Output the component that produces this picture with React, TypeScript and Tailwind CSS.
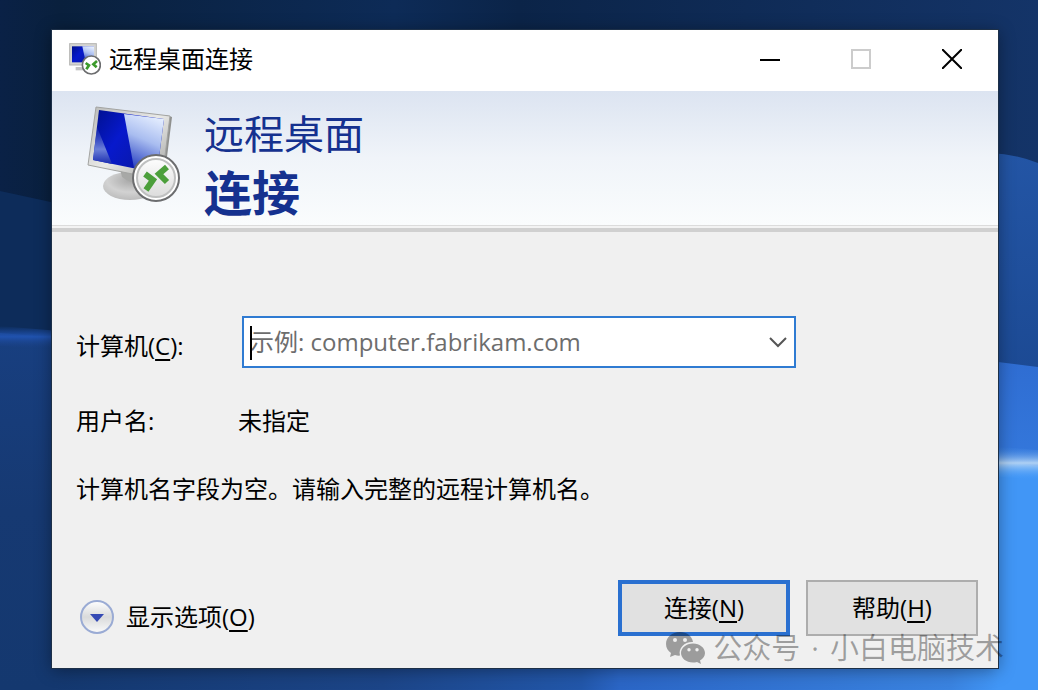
import { useState } from "react";
import type { ReactNode } from "react";

function Wallpaper() {
  return (
    <svg
      className="absolute inset-0 -z-10 h-full w-full"
      viewBox="0 0 1038 690"
      preserveAspectRatio="none"
      aria-hidden="true"
    >
      <defs>
        <linearGradient id="sky" x1="0" x2="1" y1="0" y2="0">
          <stop offset="0" stopColor="#0a2146" />
          <stop offset="0.06" stopColor="#09203d" />
          <stop offset="0.38" stopColor="#0d2b57" />
          <stop offset="0.5" stopColor="#0b2448" />
          <stop offset="1" stopColor="#143468" />
        </linearGradient>
        <linearGradient id="leftWall" x1="0" x2="0" y1="0" y2="1">
          <stop offset="0" stopColor="#183f80" />
          <stop offset="0.5" stopColor="#163972" />
          <stop offset="1" stopColor="#14386f" />
        </linearGradient>
        <linearGradient id="floor" x1="0" x2="1" y1="0" y2="0">
          <stop offset="0" stopColor="#14386f" />
          <stop offset="0.35" stopColor="#1c4588" />
          <stop offset="0.56" stopColor="#2257aa" />
          <stop offset="0.6" stopColor="#2b66c6" />
          <stop offset="0.95" stopColor="#3a83e0" />
          <stop offset="1" stopColor="#4196f6" />
        </linearGradient>
        <linearGradient id="glowLeft" x1="0" x2="0" y1="0" y2="1">
          <stop offset="0" stopColor="#1d4ea8" stopOpacity="0" />
          <stop offset="0.45" stopColor="#2052ae" />
          <stop offset="1" stopColor="#173b7a" stopOpacity="0" />
        </linearGradient>
        <linearGradient id="midRight" x1="0" x2="0" y1="0" y2="1">
          <stop offset="0" stopColor="#2355a5" />
          <stop offset="1" stopColor="#1c4a94" />
        </linearGradient>
        <linearGradient id="lowRight" x1="0" x2="0" y1="0" y2="1">
          <stop offset="0" stopColor="#2f6dd2" />
          <stop offset="1" stopColor="#3478dc" />
        </linearGradient>
        <linearGradient id="beam" x1="0" x2="0" y1="0" y2="1">
          <stop offset="0" stopColor="#3a86e6" stopOpacity="0" />
          <stop offset="0.5" stopColor="#aed0f4" />
          <stop offset="1" stopColor="#4199fa" stopOpacity="0" />
        </linearGradient>
      </defs>
      <rect width="1038" height="690" fill="url(#sky)" />
      <path d="M0 191 L60 204 V340 H0Z" fill="#0d2c5a" />
      <path d="M0 333 L60 338 V690 H0Z" fill="url(#leftWall)" />
      <path d="M0 326 L60 331 V350 L0 346Z" fill="url(#glowLeft)" />
      <path d="M990 153 Q1016 154 1038 163 V370 H990Z" fill="url(#midRight)" />
      <path d="M990 361 L1038 367 V466 H990Z" fill="url(#lowRight)" />
      <path d="M990 460 L1038 466 V690 H990Z" fill="#4196f6" />
      <path d="M990 446 L1038 450 V480 L990 476Z" fill="url(#beam)" />
      <rect x="52" y="660" width="946" height="30" fill="url(#floor)" />
    </svg>
  );
}

function RemoteIconLarge() {
  return (
    <svg className="h-[100px] w-24 shrink-0" viewBox="0 0 96 100" aria-hidden="true">
      <defs>
        <linearGradient id="frame" x1="0" x2="1" y1="0" y2="1">
          <stop offset="0" stopColor="#b9bab8" />
          <stop offset="0.5" stopColor="#e9e9e7" />
          <stop offset="1" stopColor="#9c9d9b" />
        </linearGradient>
        <linearGradient id="screen" x1="0" x2="1" y1="0" y2="0.6">
          <stop offset="0" stopColor="#00108c" />
          <stop offset="0.45" stopColor="#0719cc" />
          <stop offset="1" stopColor="#0a18a0" />
        </linearGradient>
        <linearGradient id="shine" x1="0.7" x2="0.4" y1="0" y2="1">
          <stop offset="0" stopColor="#e6efff" />
          <stop offset="0.45" stopColor="#a9bdf0" />
          <stop offset="1" stopColor="#1d36be" />
        </linearGradient>
        <linearGradient id="corner" x1="0" x2="0" y1="0" y2="1">
          <stop offset="0" stopColor="#3a50c0" stopOpacity="0.2" />
          <stop offset="0.6" stopColor="#6c80d8" />
          <stop offset="1" stopColor="#1a2cb0" />
        </linearGradient>
        <radialGradient id="foot" cx="0.5" cy="0.3" r="0.7">
          <stop offset="0" stopColor="#a8a8a8" />
          <stop offset="0.6" stopColor="#d2d2d2" />
          <stop offset="1" stopColor="#bcbcbc" />
        </radialGradient>
        <linearGradient id="badge" x1="0" x2="0" y1="0" y2="1">
          <stop offset="0" stopColor="#fdfdfd" />
          <stop offset="1" stopColor="#dcdcdc" />
        </linearGradient>
      </defs>
      <ellipse cx="44" cy="81" rx="27" ry="14" fill="url(#foot)" />
      <path d="M34 64 L60 70 L58 78 Q46 80 36 72Z" fill="#a7a8a6" />
      <path d="M80 10 L86 12 L80 60 L72 66Z" fill="#8f908e" />
      <path d="M10 2 L84 11 L76 75 L2 60Z" fill="url(#frame)" stroke="#a3a4a2" />
      <path d="M13 5 L78 14 L71 68 L7 55Z" fill="url(#screen)" />
      <path d="M38 9 L78 14 L71 68 L48 63Z" fill="url(#shine)" />
      <path d="M11 22 L26 59 L7 55Z" fill="url(#corner)" />
      <circle cx="70" cy="73" r="23" fill="#fff" stroke="#6c6d6f" strokeWidth="2" />
      <circle cx="70" cy="73" r="19" fill="url(#badge)" stroke="#bfc0c0" strokeWidth="2" />
      <path d="M59 69 L67 75 L60 85" fill="none" stroke="#4c9f3b" strokeWidth="6" />
      <path d="M81 62 L73 69 L81 77" fill="none" stroke="#4c9f3b" strokeWidth="6" />
    </svg>
  );
}

function RemoteIconSmall() {
  return (
    <svg className="h-8 w-8 shrink-0" viewBox="0 0 96 96" aria-hidden="true">
      <path d="M20 72 H58 V82 H20Z" fill="#c4c4c4" />
      <rect x="2" y="2" width="80" height="64" fill="#d4d4d2" stroke="#b4b4b2" strokeWidth="3" />
      <rect x="9" y="10" width="66" height="48" fill="url(#screen)" />
      <path d="M40 10 H75 V58 H50Z" fill="url(#shine)" />
      <circle cx="67" cy="66" r="27" fill="#fff" stroke="#6c6d6f" strokeWidth="5" />
      <path d="M50 60 L60 67 L52 79" fill="none" stroke="#3c9a2b" strokeWidth="8" />
      <path d="M84 54 L73 64 L83 73" fill="none" stroke="#3c9a2b" strokeWidth="8" />
    </svg>
  );
}

function TitleBar() {
  return (
    <header className="flex h-[61px] items-center bg-white pb-1 pl-[17px]">
      <RemoteIconSmall />
      <span className="ml-2 text-2xl leading-8">远程桌面连接</span>
      <div className="mr-px ml-auto flex h-full">
        <button type="button" aria-label="最小化" className="grid w-[91px] place-items-center">
          <svg className="h-5 w-5" viewBox="0 0 20 20">
            <path d="M0 11 H20" stroke="#000" strokeWidth="2" />
          </svg>
        </button>
        <button type="button" aria-label="最大化" disabled className="grid w-[91px] place-items-center">
          <svg className="h-5 w-5" viewBox="0 0 20 20">
            <rect x="1" y="1" width="18" height="18" fill="none" stroke="#ccc" strokeWidth="2" />
          </svg>
        </button>
        <button type="button" aria-label="关闭" className="grid w-[91px] place-items-center">
          <svg className="h-5 w-5" viewBox="0 0 20 20">
            <path d="M0 0 L20 20 M20 0 L0 20" stroke="#000" strokeWidth="2" />
          </svg>
        </button>
      </div>
    </header>
  );
}

function Banner() {
  return (
    <div>
      <div className="flex h-[134px] items-start bg-linear-to-b from-[#dce4f1] via-[#f0f4f9] to-[#fafcfd] pt-3.5 pl-[34px]">
        <RemoteIconLarge />
        <h1 className="ml-[22px] text-[#15318f]">
          <span className="block text-[40px] leading-[58px] font-normal">远程桌面</span>
          <span className="block text-5xl leading-[60px] font-bold">连接</span>
        </h1>
      </div>
      <div className="h-[3px] border-t border-[#dcdcdc] bg-[#f3f3f3]" />
      <div className="h-1 bg-[#d0d0d0]" />
    </div>
  );
}

function DialogButton({ primary, children }: { primary?: boolean; children: ReactNode }) {
  return (
    <button
      type="button"
      className={
        "h-14 w-[172px] bg-[#e1e1e1] text-2xl leading-8 " +
        (primary ? "border-4 border-[#2a70d0]" : "border-2 border-[#adadad]")
      }
    >
      {children}
    </button>
  );
}

function ComputerField() {
  const [computer, setComputer] = useState("");

  return (
    <div className="flex items-center">
      <label htmlFor="computer" className="w-[166px] shrink-0 pt-2">
        计算机(<u className="underline-offset-4">C</u>):
      </label>
      <div className="relative flex h-[52px] w-[554px] border-2 border-[#2f7bd2] bg-white">
        <input
          id="computer"
          value={computer}
          onChange={(e) => setComputer(e.target.value)}
          placeholder="示例: computer.fabrikam.com"
          className="min-w-0 flex-1 pl-1.5 outline-none placeholder:text-[#6d6d6d]"
        />
        {/* text caret */}
        <span className="absolute top-2 left-1.5 h-[34px] w-0.5 bg-black" />
        <button type="button" aria-label="最近的计算机" className="grid w-8 place-items-center">
          <svg className="h-3 w-[18px]" viewBox="0 0 18 12">
            <path d="M1 2 L9 10 L17 2" fill="none" stroke="#555" strokeWidth="2" />
          </svg>
        </button>
      </div>
    </div>
  );
}

function Watermark() {
  return (
    <div className="absolute right-[34px] bottom-6 flex items-center gap-2 text-[29px] leading-9 whitespace-nowrap text-black/35">
      <svg className="h-8 w-[39px]" viewBox="0 0 39 32" fill="currentColor" aria-hidden="true">
        <path
          fillRule="evenodd"
          d="M14 0 C6 0 0 5 0 12 C0 16 2 19 5 21 L4 25 L9 23 Q12 24 14 23.500 C12 16 19 9.500 27 10 C26 4 21 0 14 0Z M9 6 a2 2 0 1 1 0 4 a2 2 0 1 1 0 -4Z M19 6 a2 2 0 1 1 0 4 a2 2 0 1 1 0 -4Z"
        />
        <path
          fillRule="evenodd"
          d="M27 11.500 C20 11.500 15 16 15 21 C15 26 20 30.500 27 30.500 Q29 30.500 31 30 L35 32 L34 28.500 C37 27 39 24 39 21 C39 16 34 11.500 27 11.500Z M23 16 a1.700 1.700 0 1 1 0 3.400 a1.700 1.700 0 1 1 0 -3.400Z M31 16 a1.700 1.700 0 1 1 0 3.400 a1.700 1.700 0 1 1 0 -3.400Z"
        />
      </svg>
      <span className="flex gap-[11px]">
        <span>公众号</span>
        <span>·</span>
        <span>小白电脑技术</span>
      </span>
    </div>
  );
}

export default function App() {
  return (
    <main className="relative isolate flex min-h-screen pt-[30px] pr-10 pb-[22px] pl-[52px] font-['Open_Sans','Noto_Sans_CJK_SC',sans-serif] text-black">
      <Wallpaper />
      <section className="flex flex-1 flex-col bg-[#f0f0f0] shadow-[0_0_0_1px_#1d3048,0_2px_16px_#0006]">
        <TitleBar />
        <Banner />
        <div className="flex flex-1 flex-col pt-[84px] pr-5 pb-8 pl-6 text-2xl leading-8">
          <ComputerField />
          <dl className="mt-[37px] flex">
            <dt className="w-[162px]">用户名:</dt>
            <dd>未指定</dd>
          </dl>
          <p className="mt-9">计算机名字段为空。请输入完整的远程计算机名。</p>
          <div className="mt-auto flex items-center gap-4">
            <button type="button" className="mt-[18px] mr-auto flex items-center gap-3">
              <svg className="ml-1 h-[34px] w-[34px]" viewBox="0 0 34 34" aria-hidden="true">
                <defs>
                  <linearGradient id="orb" x1="0" x2="0" y1="0" y2="1">
                    <stop offset="0" stopColor="#fff" />
                    <stop offset="0.5" stopColor="#d9dadb" />
                    <stop offset="1" stopColor="#fbfbfb" />
                  </linearGradient>
                </defs>
                <circle cx="17" cy="17" r="16" fill="url(#orb)" stroke="#9aabd4" strokeWidth="2" />
                <path d="M10 14 H24 L17 22Z" fill="#3449b4" />
              </svg>
              <span>
                显示选项(<u className="underline-offset-4">O</u>)
              </span>
            </button>
            <DialogButton primary>
              连接(<u className="underline-offset-4">N</u>)
            </DialogButton>
            <DialogButton>
              帮助(<u className="underline-offset-4">H</u>)
            </DialogButton>
          </div>
        </div>
      </section>
      <Watermark />
    </main>
  );
}
